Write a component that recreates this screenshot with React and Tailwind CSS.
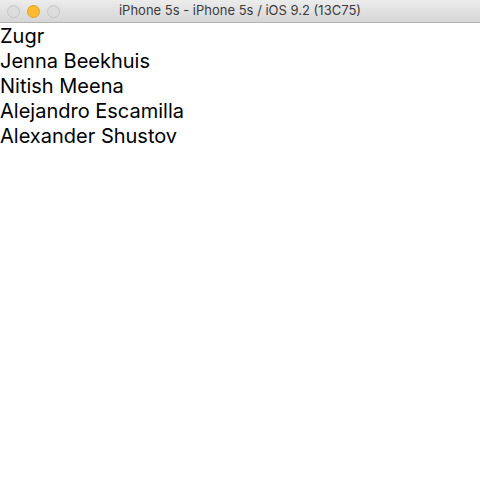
import React from "react";

const names = [
  "Zugr",
  "Jenna Beekhuis",
  "Nitish Meena",
  "Alejandro Escamilla",
  "Alexander Shustov",
];

export default function App() {
  return (
    <div className="w-[480px] h-[480px] bg-white flex flex-col" style={{ fontFamily: "Inter, 'Noto Sans', sans-serif" }}>
      {/* window title bar */}
      <div className="relative h-[23px] flex items-center justify-center bg-gradient-to-b from-[#ececec] to-[#d6d6d6] border-b border-[#b3b3b3]">
        <div className="absolute left-[7px] top-[5px] flex gap-[7px]">
          <span className="w-[13px] h-[13px] rounded-full bg-[#dcdcdc] border border-[#c6c6c6]" />
          <span className="w-[13px] h-[13px] rounded-full bg-[#fdbb2d] border border-[#e0a123]" />
          <span className="w-[13px] h-[13px] rounded-full bg-[#dcdcdc] border border-[#c6c6c6]" />
        </div>
        <span className="text-[13px] text-[#3c3c3c]">iPhone 5s - iPhone 5s / iOS 9.2 (13C75)</span>
      </div>

      {/* list */}
      <div className="flex flex-col pt-[1px]">
        {names.map((name) => (
          <div key={name} className="h-[25px] leading-[25px] text-[20px] text-black">
            {name}
          </div>
        ))}
      </div>
    </div>
  );
}
